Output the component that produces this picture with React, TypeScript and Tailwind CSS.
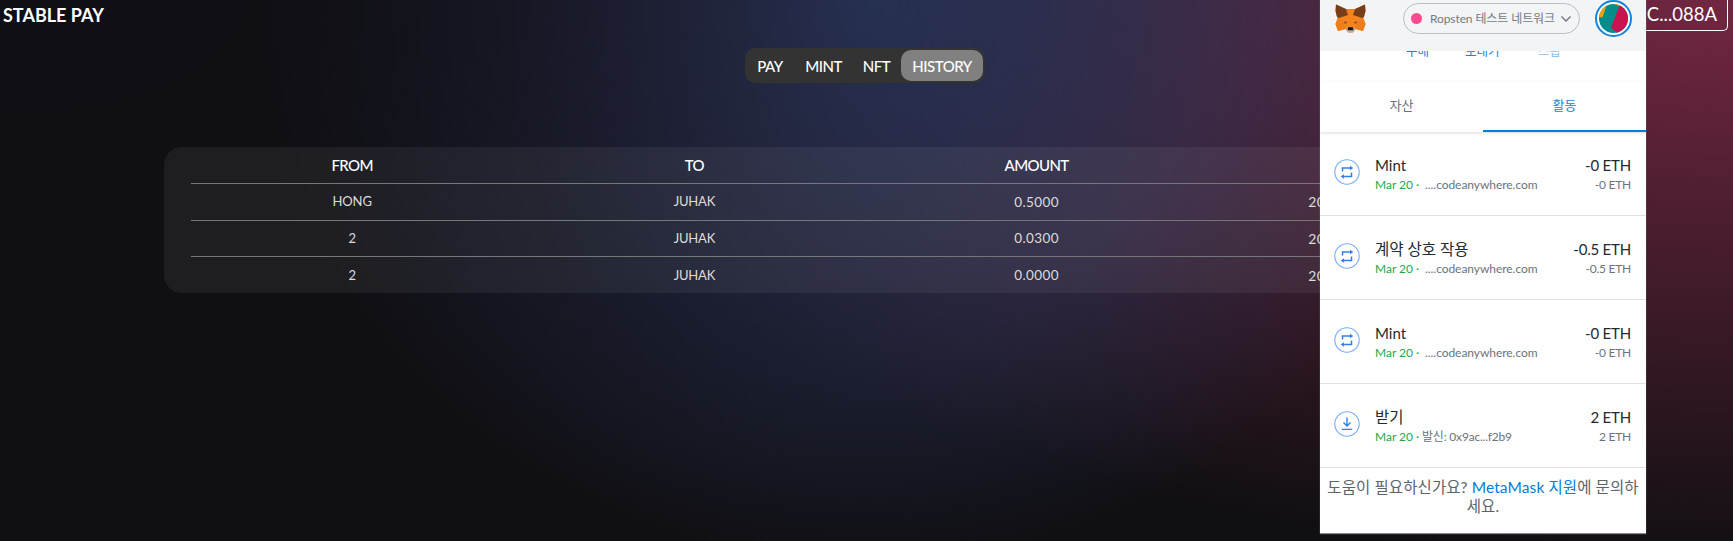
import React from "react";

const tabs = [
  { label: "PAY", cls: "w-[50px]" },
  { label: "MINT", cls: "w-[57px]" },
  { label: "NFT", cls: "w-[49px]" },
];

const rows = [
  ["HONG", "JUHAK", "0.5000", "2022-03-20 12:14:33"],
  ["2", "JUHAK", "0.0300", "2022-03-20 12:20:48"],
  ["2", "JUHAK", "0.0000", "2022-03-20 12:26:08"],
];

const cellStyles = [
  "tracking-[-0.1px]",
  "tracking-[-0.2px]",
  "text-[13.5px] tracking-[0.4px]",
  "text-[14px] tracking-[0.35px]",
];

const activity = [
  { kind: "swap", title: "Mint", from: "....codeanywhere.com", amount: "-0 ETH" },
  { kind: "swap", title: "계약 상호 작용", from: "....codeanywhere.com", amount: "-0.5 ETH" },
  { kind: "swap", title: "Mint", from: "....codeanywhere.com", amount: "-0 ETH" },
  { kind: "receive", title: "받기", from: "발신: 0x9ac...f2b9", amount: "2 ETH" },
];

function Fox() {
  return (
    <svg width="31" height="29" viewBox="0 0 31 29" className="block">
      <path d="M1 0.5 L11 5 H20 L30 0.5 L30.500 7 L28.500 14 L30.500 20 L28 27 L20.500 25 L18 28.500 H13 L10.500 25 L3 27 L0.5 20 L2.500 14 L0.5 7Z" fill="#f5841f" />
      <path d="M1 0.5 L11 5 L13 11 L4 14 L2 13 L0.5 7Z M30 0.5 L20 5 L18 11 L27 14 L29 13 L30.500 7Z" fill="#763e1a" />
      <path d="M3 15 L9 16.500 L10.500 25 L3 27 L0.5 20Z M28 15 L22 16.500 L20.500 25 L28 27 L30.500 20Z" fill="#ee7d1c" />
      <path d="M9 19.500 L10 17 L12.500 19Z M22 19.500 L21 17 L18.500 19Z" fill="#7d4b32" />
      <path d="M10.500 25 L13 23.500 H18 L20.500 25 L18 28.500 H13Z" fill="#c0ad9e" />
      <path d="M12.800 24 L13.500 23.200 H17.500 L18.200 24 V26.200 H12.800Z" fill="#161616" />
    </svg>
  );
}

function Avatar() {
  return (
    <div className="flex size-[37px] items-center justify-center rounded-full border-2 border-[#1584dc] bg-white">
      <svg width="29" height="29" viewBox="0 0 29 29" className="block rounded-full">
        <rect width="29" height="29" fill="#028c8c" />
        <path d="M0 0 H8 L3.500 13.500 L0 13Z M15 0 L21 2.500 L22 0Z" fill="#f19e02" />
        <path d="M20.500 1.500 L29 5 V29 H18 L12 23.500Z" fill="#c8144f" />
      </svg>
    </div>
  );
}

function ActivityIcon({ kind }: { kind: string }) {
  return (
    <svg width="26" height="26" viewBox="0 0 26 26" fill="none" className="block shrink-0">
      <circle cx="13" cy="13" r="12.2" stroke="#76acf8" strokeWidth="1.1" />
      {kind === "swap" ? (
        <g>
          <path d="M8.500 12.500 V9 H16.500 M17.500 13.500 V17.500 H9.500" stroke="#2f80ed" strokeWidth="1.5" />
          <path d="M16 6.700 L19.300 9 L16 11.300Z M10 15.200 L6.700 17.500 L10 19.800Z" fill="#2f80ed" />
        </g>
      ) : (
        <path d="M13 6.500 V14.800 M9.500 11.500 L13 15 L16.500 11.500 M7.700 18.400 H18.300" stroke="#2f80ed" strokeWidth="1.4" />
      )}
    </svg>
  );
}

function Wallet() {
  return (
    <aside className="absolute left-[1320px] top-0 flex h-[533px] w-[326px] flex-col overflow-hidden bg-white shadow-[0_1px_1px_#888]">
      <header className="flex h-[51px] shrink-0 items-start bg-[#f2f4f6]">
        <div className="ml-[15px] mt-[4px]">
          <Fox />
        </div>
        <div className="ml-[37px] mt-[3px] flex h-[31px] w-[177px] items-center rounded-full border border-[#bbc0c5] pl-[7px] text-[12px] text-[#737b84]">
          <i className="size-[11px] rounded-full bg-[#ff4a8d]" />
          <span className="ml-[8px] w-[124px] whitespace-nowrap tracking-[-0.1px]">Ropsten 테스트 네트워크</span>
          <svg width="12" height="8" viewBox="0 0 12 8" fill="none" className="ml-[6px]">
            <path d="M1.500 1.500 L6 6 L10.500 1.500" stroke="#6a737d" strokeWidth="1.3" />
          </svg>
        </div>
        <div className="ml-[15px]">
          <Avatar />
        </div>
      </header>
      <div className="flex h-[31px] shrink-0 overflow-hidden text-[12.5px] leading-[16px] text-[#1584dc]">
        <span className="-mt-[7px] ml-[86px] w-[59px]">구매</span>
        <span className="-mt-[7px] w-[73px]">보내기</span>
        <span className="-mt-[7px] opacity-50">스왑</span>
      </div>
      <nav className="flex h-[50px] shrink-0 text-[13px] shadow-[0_1px_3px_#00000026]">
        <div className="flex flex-1 items-center justify-center pb-[2px] text-[#6a737d]">자산</div>
        <div className="flex flex-1 items-center justify-center border-b-2 border-[#037dd6] text-[#1584dc]">활동</div>
      </nav>
      <ul className="shrink-0">
        {activity.map((a, i) => (
          <li key={i} className="flex h-[84px] items-start border-b border-[#dfe1e3] pl-[14px] pr-[15px] pt-[27px]">
            <ActivityIcon kind={a.kind} />
            <div className="-mt-[5px] ml-[15px] flex-1">
              <div className="flex h-[22px] justify-between text-[15px] leading-[22px] text-[#24292e]">
                <span className={a.title === "Mint" ? "" : "text-[15.500px]"}>{a.title}</span>
                <span className="tracking-[-0.2px]">{a.amount}</span>
              </div>
              <div className="flex h-[18px] justify-between text-[12px] leading-[18px] text-[#6a737d]">
                <span className="flex whitespace-pre">
                  <span className="w-[47px] text-[#28a745]">Mar 20 · </span>
                  <span className={a.kind === "swap" ? "ml-[3px] tracking-[-0.05px]" : "tracking-[-0.2px]"}>{a.from}</span>
                </span>
                <span className="tracking-[-0.25px]">{a.amount}</span>
              </div>
            </div>
          </li>
        ))}
      </ul>
      <p className="whitespace-nowrap pt-[10px] text-center text-[15.500px] leading-[19px] tracking-[0.1px] text-[#5d646b]">
        도움이 필요하신가요? <span className="text-[#037dd6]">MetaMask 지원</span>에 문의하
        <br />
        세요.
      </p>
    </aside>
  );
}

export default function App() {
  return (
    <div className="relative h-[541px] w-[1733px] overflow-hidden bg-[#100f13] font-[Lato,'Noto_Sans_CJK_KR',sans-serif] text-white">
      <div className="h-[800px] bg-[radial-gradient(at_0%_0%,hsla(253,16%,7%,1)_0,transparent_50%),radial-gradient(at_50%_0%,hsla(225,39%,30%,1)_0,transparent_50%),radial-gradient(at_100%_0%,hsla(339,49%,30%,1)_0,transparent_50%)]">
        <header className="flex h-[48px] items-start justify-between pl-[3px] pr-[5px]">
          <h1 className="mt-[3px] text-[18px] font-bold leading-[24px]">STABLE PAY</h1>
          <div className="flex h-[31px] w-[140px] items-center justify-end rounded-b-[5px] border border-t-0 border-white pr-[10px] text-[18.500px]">0x2C...088A</div>
        </header>
        <nav className="ml-[745px] flex h-[35px] w-[240px] items-center rounded-[10px] bg-[#333] text-[15px] font-medium tracking-[-0.500px]">
          {tabs.map((t) => (
            <span key={t.label} className={`${t.cls} pt-[1px] text-center`}>{t.label}</span>
          ))}
          <span className="flex h-[31px] w-[82px] items-center justify-center rounded-[10px] bg-[#808080] pt-[1px]">HISTORY</span>
        </nav>
        <section className="ml-[164px] mt-[64px] h-[146px] w-[1403px] rounded-[18px] bg-white/[0.06] px-[27px]">
          <div className="grid h-[37px] grid-cols-4 items-center gap-x-[20px] border-b border-[#77777b] text-center text-[15px] font-medium tracking-[-0.6px]">
            <span>FROM</span>
            <span>TO</span>
            <span>AMOUNT</span>
            <span>DATE</span>
          </div>
          {rows.map((r, i) => (
            <div key={i} className="grid h-[36.5px] grid-cols-4 items-center gap-x-[20px] border-b border-[#77777b] text-center text-[13px] text-[#ddd] last:border-0">
              {r.map((c, j) => (
                <span key={j} className={cellStyles[j]}>{c}</span>
              ))}
            </div>
          ))}
        </section>
      </div>
      <Wallet />
    </div>
  );
}
